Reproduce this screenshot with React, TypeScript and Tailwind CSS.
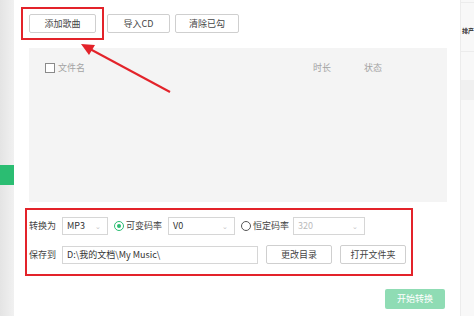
import React from 'react'

const font = { fontFamily: '"Noto Sans CJK SC", "Noto Sans", sans-serif' }

function Btn({ children, className = '' }: { children: React.ReactNode; className?: string }) {
  return (
    <div
      className={`flex h-[19px] items-center justify-center rounded-[2px] border border-[#cfcfcf] bg-white text-[9px] text-[#444] ${className}`}
    >
      {children}
    </div>
  )
}

function Select({ value, className = '', disabled = false }: { value: string; className?: string; disabled?: boolean }) {
  return (
    <div
      className={`flex h-[18px] items-center justify-between border border-[#d6d6d6] bg-white pl-[4px] pr-[6px] text-[9px] ${disabled ? 'text-[#bbb]' : 'text-[#333]'} ${className}`}
    >
      <span>{value}</span>
      <span className="text-[7px] text-[#c4c4c4]">⌄</span>
    </div>
  )
}

export default function App() {
  return (
    <div className="relative flex h-[316px] w-[474px] overflow-hidden bg-white" style={font}>
      {/* left sidebar */}
      <div className="w-[14px] shrink-0 bg-gradient-to-r from-[#e4e4e4] to-[#f1f1f1]">
        <div className="mt-[165px] h-[20px] bg-[#2bbd72]" />
      </div>

      {/* main panel */}
      <div className="w-[446px] shrink-0 bg-white">
        <div className="ml-[7px] mt-[7px] flex items-center">
          <div className="border-2 border-[#e3232a] px-[6px] py-[5px]">
            <Btn className="w-[67px]">添加歌曲</Btn>
          </div>
          <Btn className="ml-[3px] w-[63px]">导入CD</Btn>
          <Btn className="ml-[5px] w-[64px]">清除已勾</Btn>
        </div>

        <div className="ml-[15px] mt-[8px] h-[154px] w-[418px] bg-[#f4f4f4]">
          <div className="flex items-center pt-[13px] text-[9px] text-[#a3a3a3]">
            <span className="ml-[16px] h-[10px] w-[10px] border border-[#8a8a8a] bg-white" />
            <span className="ml-[3px]">文件名</span>
            <span className="ml-[228px]">时长</span>
            <span className="ml-[33px]">状态</span>
          </div>
        </div>

        <div className="ml-[11px] mt-[6px] h-[68px] w-[388px] border-2 border-[#e3232a] pl-[2px] pt-[7px] text-[9px] text-[#444]">
          <div className="flex items-center">
            <span className="w-[33px]">转换为</span>
            <Select value="MP3" className="w-[46px]" />
            <span className="ml-[6px] flex h-[10px] w-[10px] items-center justify-center rounded-full border border-[#2bbd72]">
              <span className="h-[4px] w-[4px] rounded-full bg-[#2bbd72]" />
            </span>
            <span className="ml-[2px]">可变码率</span>
            <Select value="V0" className="ml-[6px] w-[67px]" />
            <span className="ml-[6px] h-[10px] w-[10px] rounded-full border border-[#555]" />
            <span className="ml-[2px]">恒定码率</span>
            <Select value="320" disabled className="ml-[4px] w-[72px]" />
          </div>
          <div className="mt-[10px] flex items-center">
            <span className="w-[33px]">保存到</span>
            <div className="flex h-[18px] w-[196px] items-center border border-[#d6d6d6] bg-white pl-[4px] text-[9px] text-[#333]">
              D:\我的文档\My Music\
            </div>
            <Btn className="ml-[8px] w-[66px]">更改目录</Btn>
            <Btn className="ml-[8px] w-[66px]">打开文件夹</Btn>
          </div>
        </div>

        <div className="ml-[371px] mt-[13px] flex h-[20px] w-[60px] items-center justify-center rounded-[2px] bg-[#8fdcb4] text-[9px] text-white">
          开始转换
        </div>
      </div>

      {/* right sidebar */}
      <div className="flex-1 overflow-hidden border-l border-[#ececec] bg-[#f8f8f8]">
        <div className="mt-[2px] h-[50px] border-y border-[#ececec] pl-[1px] pt-[23px] text-[6px] font-bold whitespace-nowrap text-[#333]">
          排产
        </div>
        <div className="mt-[28px] h-[20px] bg-[#f0f0f0]" />
      </div>

      {/* annotation arrow */}
      <svg className="pointer-events-none absolute left-0 top-0" width="474" height="316">
        <line x1="170" y1="92" x2="90" y2="49" stroke="#e3232a" strokeWidth="2" />
        <polygon points="81,44 95,45 89,55" fill="#e3232a" />
      </svg>
    </div>
  )
}
